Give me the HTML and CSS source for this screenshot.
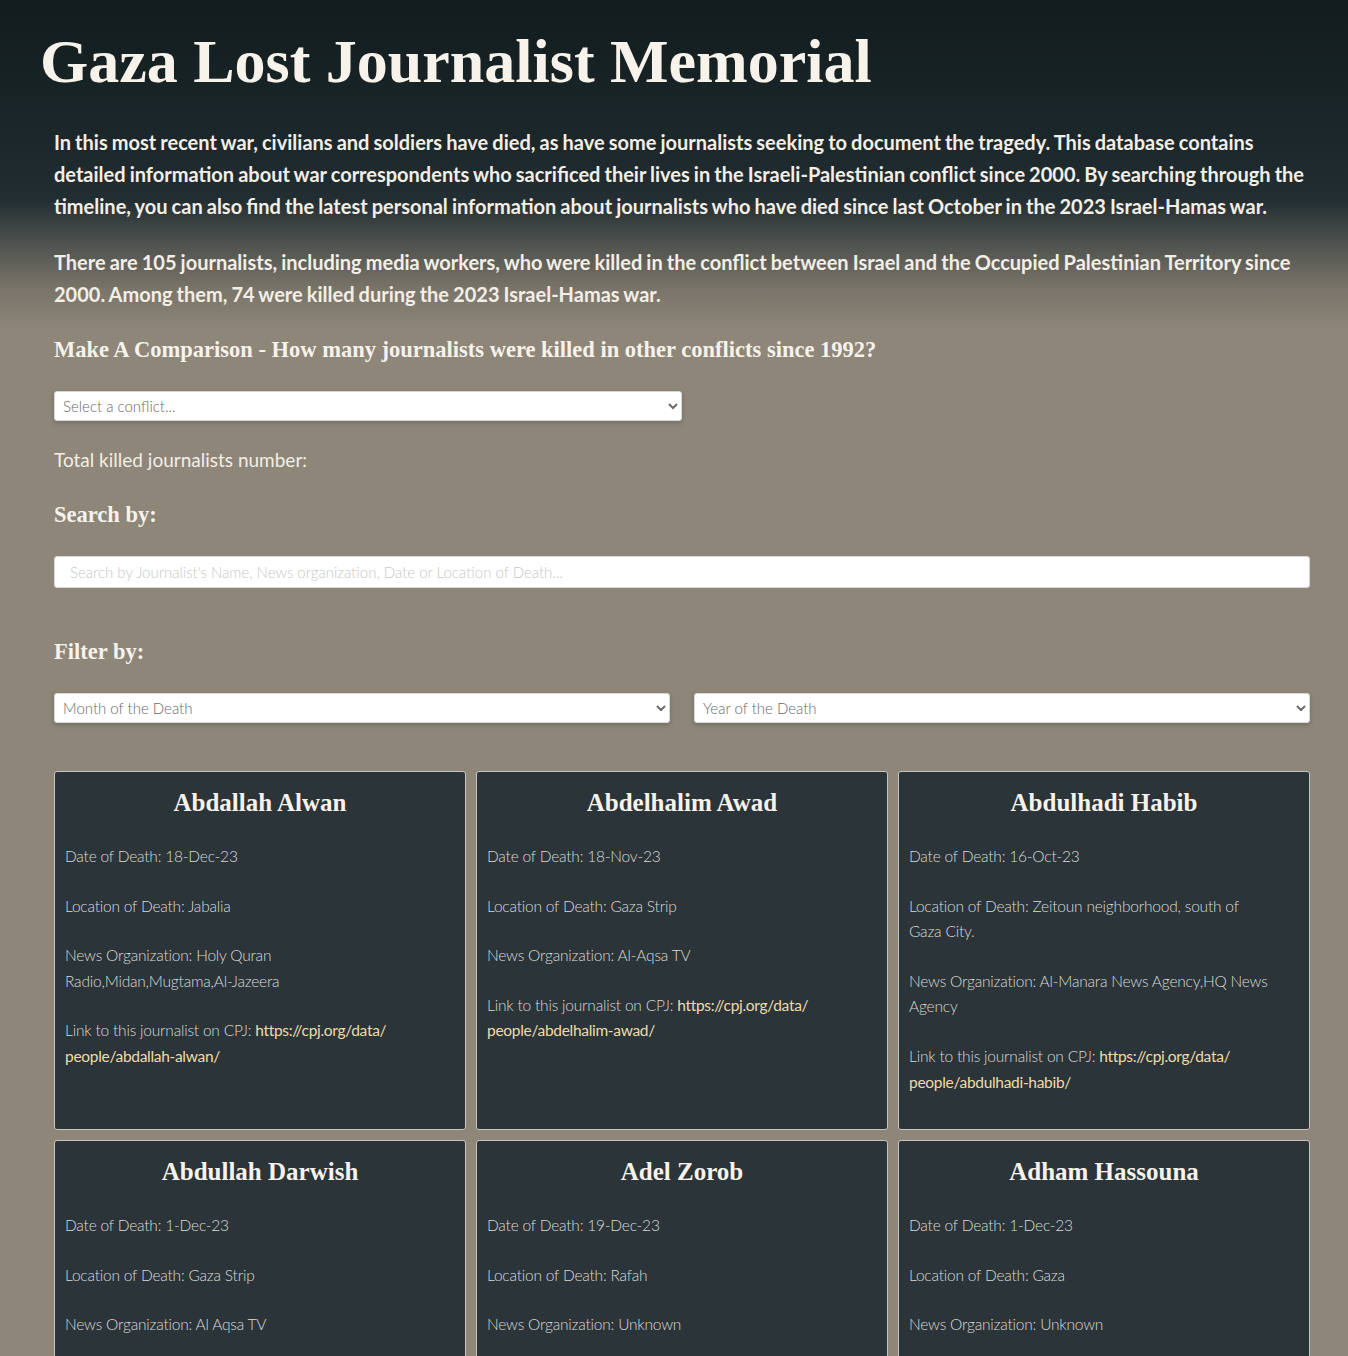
FILE: index.html
```html
<!DOCTYPE html>
<html lang="en">
<head>
<meta charset="utf-8">
<title>Gaza Lost Journalist Memorial</title>
<link rel="stylesheet" href="styles.css">
</head>
<body>
<header class="site-header">
  <h1 class="site-title">Gaza Lost Journalist Memorial</h1>
</header>
<main class="content">
  <p class="intro intro-first">In this most recent war, civilians and soldiers have died, as have some journalists seeking to document the tragedy. This database contains detailed information about war correspondents who sacrificed their lives in the Israeli-Palestinian conflict since 2000. By searching through the timeline, you can also find the latest personal information about journalists who have died since last October in the 2023 Israel-Hamas war.</p>
  <p class="intro intro-second">There are 105 journalists, including media workers, who were killed in the conflict between Israel and the Occupied Palestinian Territory since 2000. Among them, 74 were killed during the 2023 Israel-Hamas war.</p>

  <h3 class="section-heading comparison-heading">Make A Comparison - How many journalists were killed in other conflicts since 1992?</h3>
  <select class="field conflict-select">
    <option>Select a conflict...</option>
  </select>
  <p class="total-line">Total killed journalists number:</p>

  <h3 class="section-heading label-heading search-heading">Search by:</h3>
  <input class="field search-input" type="text" placeholder="Search by Journalist's Name, News organization, Date or Location of Death...">

  <h3 class="section-heading label-heading filter-heading">Filter by:</h3>
  <div class="filters">
    <select class="field filter-select"><option>Month of the Death</option></select>
    <select class="field filter-select"><option>Year of the Death</option></select>
  </div>

  <div class="cards">
    <article class="card">
      <h2 class="card-name">Abdallah Alwan</h2>
      <p class="card-line">Date of Death: 18-Dec-23</p>
      <p class="card-line">Location of Death: Jabalia</p>
      <p class="card-line">News Organization: Holy Quran <span class="nowrap">Radio,Midan,Mugtama,Al-Jazeera</span></p>
      <p class="card-line">Link to this journalist on CPJ: <a class="card-link" href="#">https://cpj.org/data/<wbr>people/abdallah-alwan/</a></p>
    </article>
    <article class="card">
      <h2 class="card-name">Abdelhalim Awad</h2>
      <p class="card-line">Date of Death: 18-Nov-23</p>
      <p class="card-line">Location of Death: Gaza Strip</p>
      <p class="card-line">News Organization: Al-Aqsa TV</p>
      <p class="card-line">Link to this journalist on CPJ: <a class="card-link" href="#">https://cpj.org/data/<wbr>people/abdelhalim-awad/</a></p>
    </article>
    <article class="card">
      <h2 class="card-name">Abdulhadi Habib</h2>
      <p class="card-line">Date of Death: 16-Oct-23</p>
      <p class="card-line">Location of Death: Zeitoun neighborhood, south of <span class="nowrap">Gaza City.</span></p>
      <p class="card-line">News Organization: Al-Manara News Agency,HQ News Agency</p>
      <p class="card-line">Link to this journalist on CPJ: <a class="card-link" href="#">https://cpj.org/data/<wbr>people/abdulhadi-habib/</a></p>
    </article>
    <article class="card">
      <h2 class="card-name">Abdullah Darwish</h2>
      <p class="card-line">Date of Death: 1-Dec-23</p>
      <p class="card-line">Location of Death: Gaza Strip</p>
      <p class="card-line">News Organization: Al Aqsa TV</p>
      <p class="card-line">Link to this journalist on CPJ: <a class="card-link" href="#">https://cpj.org/data/<wbr>people/abdullah-darwish/</a></p>
    </article>
    <article class="card">
      <h2 class="card-name">Adel Zorob</h2>
      <p class="card-line">Date of Death: 19-Dec-23</p>
      <p class="card-line">Location of Death: Rafah</p>
      <p class="card-line">News Organization: Unknown</p>
      <p class="card-line">Link to this journalist on CPJ: <a class="card-link" href="#">https://cpj.org/data/<wbr>people/adel-zorob/</a></p>
    </article>
    <article class="card">
      <h2 class="card-name">Adham Hassouna</h2>
      <p class="card-line">Date of Death: 1-Dec-23</p>
      <p class="card-line">Location of Death: Gaza</p>
      <p class="card-line">News Organization: Unknown</p>
      <p class="card-line">Link to this journalist on CPJ: <a class="card-link" href="#">https://cpj.org/data/<wbr>people/adham-hassouna/</a></p>
    </article>
  </div>
</main>
</body>
</html>
```

FILE: styles.css
```css
html, body {
  margin: 0;
  padding: 0;
}

body {
  min-height: 1356px;
  background: linear-gradient(180deg, #121c1e 0px, #1c282b 150px, #222e32 200px, #4b4f4c 240px, #7a756a 290px, #8d8679 330px, #8d8679 100%);
  background-color: #8d8679;
  font-family: Lato, "Liberation Sans", sans-serif;
  color: #f3eee6;
}

.site-header {
  padding: 24px 0 0 40px;
}

.site-title {
  margin: 0;
  font-family: "Liberation Serif", serif;
  font-weight: bold;
  font-size: 62px;
  line-height: 74px;
  color: #f7f2ea;
}

.content {
  padding: 0 38px 40px 54px;
  display: flex;
  flex-direction: column;
  align-items: flex-start;
}

.intro {
  margin: 0;
  font-size: 20px;
  font-weight: bold;
  line-height: 32px;
  word-spacing: -0.8px;
  color: #f3eee6;
}

.intro-first {
  margin-top: 28px;
}

.intro-second {
  margin-top: 24px;
}

.section-heading {
  margin: 0;
  font-family: "Liberation Serif", serif;
  font-size: 22.5px;
  line-height: 30px;
  color: #f7f2ea;
}

.comparison-heading {
  margin-top: 25px;
  font-weight: bold;
}

.label-heading {
  font-weight: bold;
}

.search-heading {
  margin-top: 25px;
}

.filter-heading {
  margin-top: 49px;
}

.field {
  box-sizing: border-box;
  background: #ffffff;
  border: 1px solid #d8d8d8;
  border-radius: 3px;
  box-shadow: 0 2px 5px rgba(0, 0, 0, 0.18);
  font-family: Lato, "Liberation Sans", sans-serif;
  font-size: 15px;
  font-weight: 300;
  color: #6a6a6a;
}

.conflict-select {
  margin-top: 26px;
  width: 628px;
  height: 30px;
  padding: 0 4px;
}

.total-line {
  margin: 24px 0 0;
  font-size: 19px;
  line-height: 30px;
  font-weight: normal;
  color: #f3eee6;
}

.search-input {
  margin-top: 26px;
  width: 100%;
  height: 32px;
  padding: 0 15px;
  box-shadow: none;
}

.search-input::placeholder {
  color: #c9c9c9;
}

.filters {
  margin-top: 26px;
  width: 100%;
  display: grid;
  grid-template-columns: 1fr 1fr;
  gap: 24px;
}

.filter-select {
  width: 100%;
  height: 30px;
  padding: 0 4px;
}

.cards {
  margin-top: 48px;
  width: 100%;
  display: grid;
  grid-template-columns: repeat(3, 1fr);
  gap: 10px;
}

.card {
  background: #2a3439;
  border: 1px solid #c6c6c4;
  border-radius: 3px;
  padding: 10px;
  color: #dadad8;
}

.card-name {
  margin: 6px 0 26px;
  text-align: center;
  font-family: "Liberation Serif", serif;
  font-weight: bold;
  font-size: 25px;
  line-height: 30px;
  color: #f7f2ea;
}

.card-line {
  margin: 0 0 24px;
  font-size: 15.5px;
  font-weight: 300;
  letter-spacing: -0.2px;
  line-height: 25.6px;
}

.nowrap {
  white-space: nowrap;
}

.card-link {
  color: #f0dba8;
  font-weight: 400;
  letter-spacing: -0.3px;
  text-decoration: none;
}
```
